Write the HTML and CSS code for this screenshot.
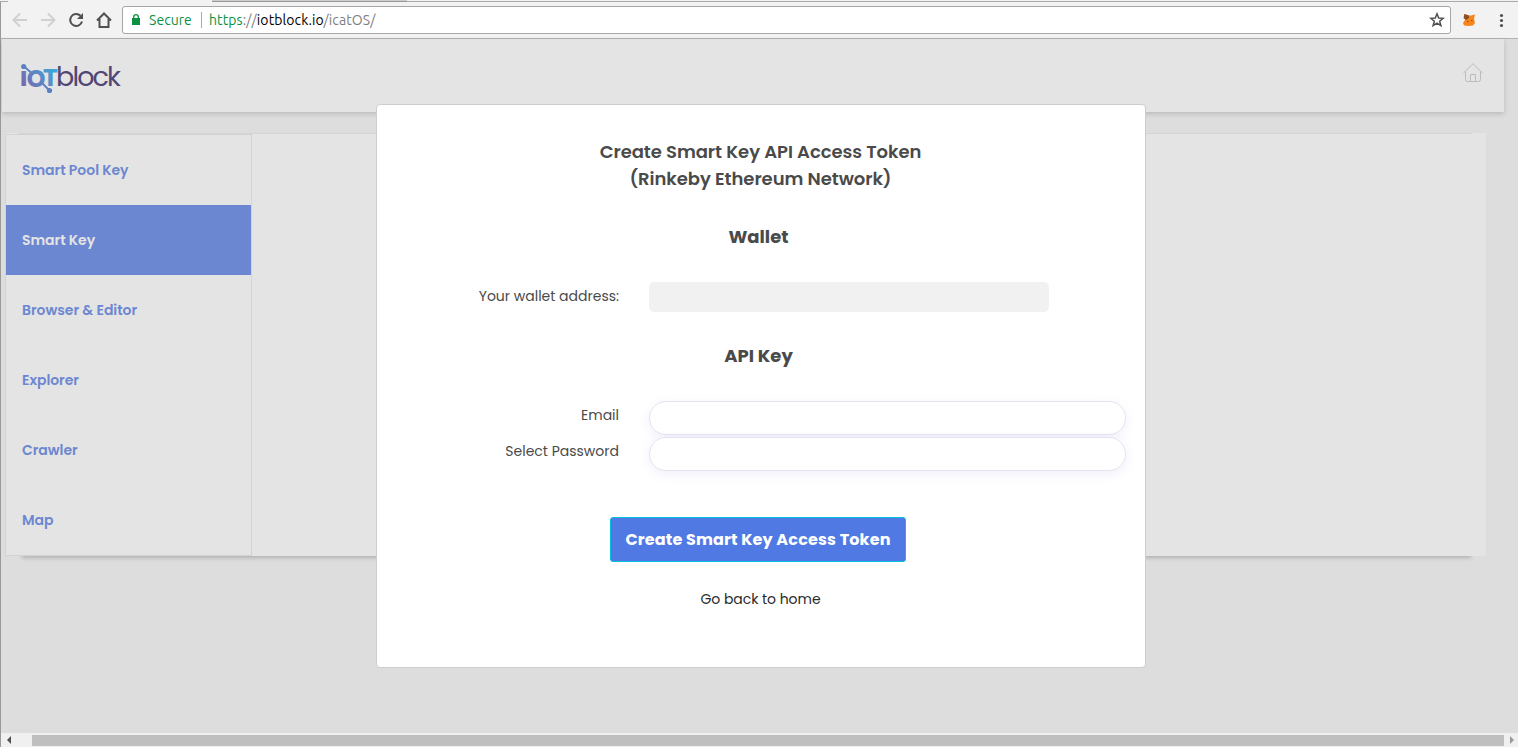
FILE: index.html
```html
<!DOCTYPE html>
<html lang="en">
<head>
<meta charset="utf-8">
<title>iotblock</title>
<link rel="stylesheet" href="styles.css">
</head>
<body>
<div class="tabstrip"><span class="tab-edge"></span><span class="tab-active"></span><span class="tab-idle"></span><span class="tab-rest"></span></div>
<div class="toolbar">
  <svg class="nav-icons" width="120" height="36" viewBox="0 2 120 36" fill="none" stroke-width="2">
    <path d="M27 20H14M20 13.500L13.500 20L20 26.500" stroke="#d0d0d0"/>
    <path d="M41 20H54M48 13.500L54.500 20L48 26.500" stroke="#d0d0d0"/>
    <path d="M80.500 15.800A6 6 0 1 0 82 21.500" stroke="#505050"/>
    <path d="M83 13V19H77Z" fill="#505050"/>
    <path d="M97 20.500L104 13.500L111 20.500M99.500 19V27H108.500V19" stroke="#505050"/>
  </svg>
  <div class="address">
    <svg class="lock" width="10" height="14" viewBox="0 0 10 14"><rect x="1" y="5" width="8" height="7" fill="#0b8f41"/><path d="M2.700 6V4a2.300 2.300 0 0 1 4.600 0V6" fill="none" stroke="#0b8f41" stroke-width="1.300"/></svg>
    <span class="secure">Secure</span>
    <span class="divider"></span>
    <span class="url"><span class="scheme">https</span>://<span class="host">iotblock.io</span>/icatOS/</span>
    <svg class="star" width="16" height="16" viewBox="0 0 16 16"><path d="M8 1.800L9.700 6L14.200 6.300L10.700 9.200L11.900 13.700L8 11.200L4.100 13.700L5.300 9.200L1.800 6.300L6.300 6Z" fill="none" stroke="#505050" stroke-width="1.500"/></svg>
  </div>
  <svg class="ext" width="60" height="36" viewBox="1458 2 60 36">
    <path d="M1464 14L1468 15.500H1471L1475 14.500L1474 19L1475 23L1473 25.500L1469 26L1464 25.500L1463 23L1465 20Z" fill="#f6851b"/>
    <path d="M1464.500 14L1469 15.500V18L1466 20L1463.500 18Z" fill="#8a5023"/>
    <path d="M1467 21.500H1468.500M1471 20.500H1472.500" stroke="#a34b08"/>
    <g fill="#505050"><circle cx="1501.500" cy="15.500" r="1.600"/><circle cx="1501.500" cy="20.500" r="1.600"/><circle cx="1501.500" cy="25.500" r="1.600"/></g>
  </svg>
</div>
<div class="viewport">
  <header class="site-header">
    <svg class="logo" width="130" height="60" viewBox="16 48 130 60">
      <defs><linearGradient id="g" gradientUnits="userSpaceOnUse" x1="22" y1="87" x2="54" y2="64"><stop offset="0" stop-color="#7a64ad"/><stop offset=".5" stop-color="#5b88c6"/><stop offset="1" stop-color="#38add9"/></linearGradient></defs>
      <text class="logo-bold" y="85.500" fill="url(#g)"><tspan x="19.500" font-size="26">ı</tspan><tspan class="logo-o" x="26.500" y="86.500" font-size="30">o</tspan><tspan x="43" y="85.500" font-size="25">T</tspan></text>
      <path d="M24 66.500L31 72.500M41 82L49 90" stroke="#5f82c4" stroke-width="2"/>
      <circle cx="23.700" cy="66.500" r="2.600" fill="#5c80c4"/><circle cx="49.500" cy="90.500" r="2.600" fill="#5c80c4"/>
      <text class="logo-thin" x="56" y="85.500" font-size="27" textLength="65" lengthAdjust="spacing" fill="#504775">block</text>
    </svg>
    <svg class="home" width="22" height="22" viewBox="0 0 22 22" fill="none" stroke="#bcbcbc"><path d="M1.500 11L11 1.700L20.500 11M3.500 9.500V17.500Q3.500 19.500 5.500 19.500H16.500Q18.500 19.500 18.500 17.500V9.500M8.500 19.500V12.500H13.500V19.500"/></svg>
  </header>
  <main class="panel">
    <nav class="sidebar">
      <a>Smart Pool Key</a>
      <a class="active">Smart Key</a>
      <a>Browser &amp; Editor</a>
      <a>Explorer</a>
      <a>Crawler</a>
      <a>Map</a>
    </nav>
  </main>
</div>
<div class="scrollbar"><span class="arrow-left"></span><span class="thumb"></span><span class="arrow-right"></span></div>
<section class="modal">
  <h1>Create Smart Key API Access Token<br>(Rinkeby Ethereum Network)</h1>
  <h2 class="wallet-title">Wallet</h2>
  <div class="row wallet-row"><label>Your wallet address:</label><div class="wallet"></div></div>
  <h2 class="api-title">API Key</h2>
  <div class="row"><label>Email</label><input type="text"></div>
  <div class="row"><label>Select Password</label><input type="password"></div>
  <button>Create Smart Key Access Token</button>
  <a class="back">Go back to home</a>
</section>
</body>
</html>
```
FILE: styles.css
```css
* { box-sizing: border-box; }
body { margin: 0; width: 1518px; height: 747px; overflow: hidden; display: flex; flex-direction: column; background: #ddd; font-family: Poppins, Inter, sans-serif; font-size: 14px; color: #4a4a4a; }
.tabstrip { height: 2px; display: flex; background: #f2f2f2; }
.tab-edge { width: 8px; border-bottom: 1px solid #aaa; }
.tab-active { width: 204px; }
.tab-idle { width: 195px; background: #ccc; border-bottom: 1px solid #999; }
.tab-rest { flex: 1; border-bottom: 1px solid #aaa; }
.toolbar { height: 37px; display: flex; background: #f2f2f2; border-bottom: 1px solid #b1b1b1; border-left: 1px solid #999; }
.nav-icons { margin-left: -1px; }
.address { width: 1329px; height: 28px; margin: 4px 7px 0 2px; display: flex; align-items: center; background: #fff; border: 1px solid #a6a6a6; border-radius: 3px; padding: 0 5px 0 8px; font: 14px Ubuntu, "Noto Sans", sans-serif; white-space: nowrap; }
.lock { margin-right: 8px; }
.secure { color: #0b8f41; width: 52px; letter-spacing: .05px; }
.divider { width: 1px; height: 16px; background: #aaa; margin-right: 7px; }
.url { color: #808080; flex: 1; letter-spacing: .1px; }
.scheme { color: #0b8f41; }
.host { color: #000; }
.viewport { position: relative; z-index: 0; height: 694px; border-left: 1px solid #999; padding-left: 1px; background: #ddd; }
.site-header { width: 1502px; height: 73px; display: flex; justify-content: space-between; background: #e4e4e4; box-shadow: 0 2px 5px rgba(0,0,0,.16); padding: 9px 20px 0 14px; }
.logo-bold { font-family: Poppins, Inter, sans-serif; font-weight: 700; }
.logo-o { font-weight: 600; }
.logo-thin { font-family: Poppins, Lato, sans-serif; font-weight: 400; }
.home { margin-top: 14px; }
.panel { position: relative; width: 1481px; height: 423px; margin: 21px 0 0 3px; background: #e4e4e4; }
.panel::before { content: ""; position: absolute; z-index: -1; inset: 2px 15px 0 17px; box-shadow: 0 2px 4px rgba(0,0,0,.2); }
.panel::after { content: ""; position: absolute; inset: 0 14px auto 14px; height: 1px; background: #d4d4d4; }
.sidebar { width: 247px; height: 422px; border: 1px solid #d3d3d3; background: #e4e4e4; position: relative; top: 1px; }
.sidebar a { display: flex; align-items: center; height: 70px; padding-left: 16px; font-weight: 600; letter-spacing: -.04px; color: #6c87d1; }
.sidebar .active { background: #6c87d1; color: #e4e4e4; }
.scrollbar { height: 14px; display: flex; align-items: center; background: #f0f0f0; border-left: 1px solid #999; }
.arrow-left { border: 4px solid transparent; border-left: 0; border-right-color: #505050; margin: 0 21px 0 6px; }
.thumb { width: 1472px; height: 11px; background: #bfbfbf; }
.arrow-right { border: 4px solid transparent; border-right: 0; border-left-color: #999; margin-left: 6px; }
.modal { position: absolute; left: 376px; top: 104px; width: 770px; height: 564px; background: #fff; border: 1px solid #cdcdcd; border-radius: 4px; padding-top: 33px; display: flex; flex-direction: column; }
h1 { margin: 0; font-size: 18px; line-height: 27px; font-weight: 600; text-align: center; letter-spacing: -.06px; padding-right: 1px; }
h2 { margin: 0; font-size: 18px; line-height: 27px; font-weight: 700; text-align: center; padding-right: 5px; }
.wallet-title { margin-top: 31px; }
.api-title { margin: 28px 0 32px; }
.row { display: flex; height: 36px; }
.wallet-row { height: 32px; margin-top: 32px; }
label { width: 242px; margin-right: 30px; text-align: right; line-height: 28px; white-space: nowrap; }
.wallet { width: 400px; height: 30px; border-radius: 5px; background: #f1f1f1; }
input { width: 477px; height: 34px; border: 1px solid #e6e3f1; border-radius: 17px; background: #fff; box-shadow: 0 3px 12px rgba(100,70,200,.09); }
button { width: 296px; height: 45px; margin: 44px 0 0 233px; padding: 0; background: #5079e3; border: 1px solid #00bfe0; border-radius: 3px; color: #fff; font: 700 16px Poppins, Inter, sans-serif; letter-spacing: .15px; white-space: nowrap; }
.back { text-align: center; margin-top: 27px; line-height: 20px; color: #292b2c; padding-right: 1px; letter-spacing: -.05px; }
```
